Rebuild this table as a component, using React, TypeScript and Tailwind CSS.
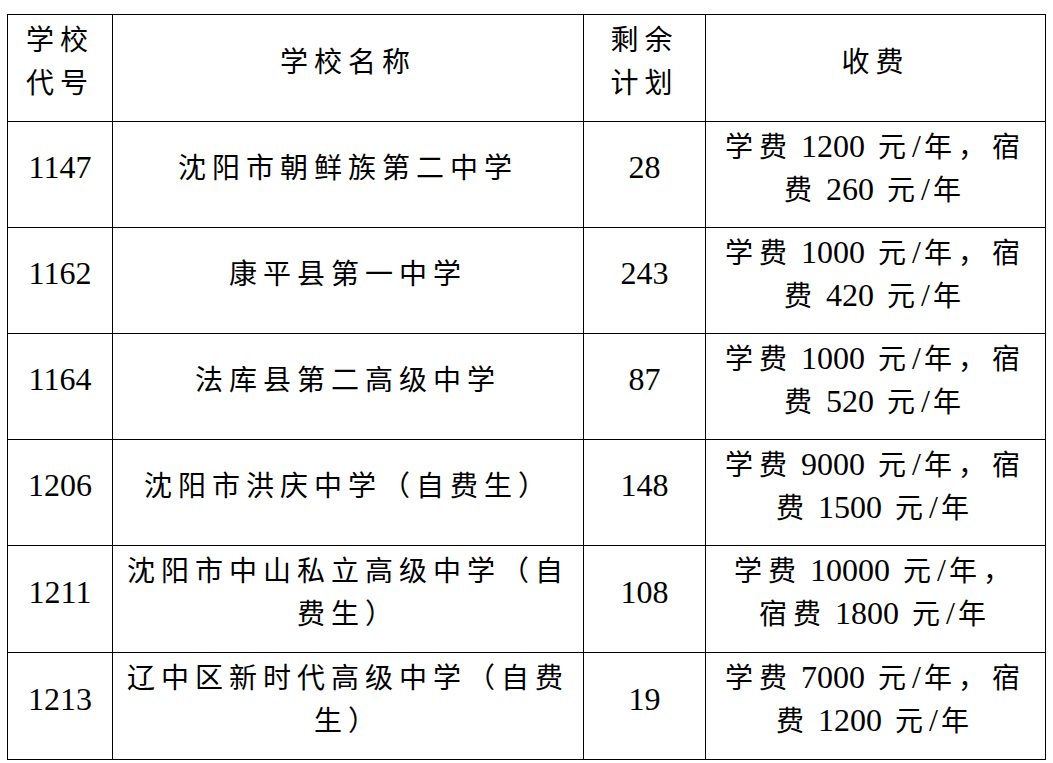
import React from "react"

interface Row {
    code: string
    name: string[]
    left: string
    fee: string[]
}

const rows: Row[] = [
    { code: "1147", name: ["沈阳市朝鲜族第二中学"], left: "28", fee: ["学费 1200 元/年，宿", "费 260 元/年"] },
    { code: "1162", name: ["康平县第一中学"], left: "243", fee: ["学费 1000 元/年，宿", "费 420 元/年"] },
    { code: "1164", name: ["法库县第二高级中学"], left: "87", fee: ["学费 1000 元/年，宿", "费 520 元/年"] },
    { code: "1206", name: ["沈阳市洪庆中学（自费生）"], left: "148", fee: ["学费 9000 元/年，宿", "费 1500 元/年"] },
    { code: "1211", name: ["沈阳市中山私立高级中学（自", "费生）"], left: "108", fee: ["学费 10000 元/年，", "宿费 1800 元/年"] },
    { code: "1213", name: ["辽中区新时代高级中学（自费", "生）"], left: "19", fee: ["学费 7000 元/年，宿", "费 1200 元/年"] },
]

const rowHeights = ["h-[107px]", "h-[106px]", "h-[106px]", "h-[106px]", "h-[106px]", "h-[107px]", "h-[107px]"]

// split a line into latin runs (serif, wider) and CJK runs (tracked out)
function Mixed({ text }: { text: string }) {
    const parts = text.split(/([\x00-\x7f]+)/).filter((p) => p.length > 0)
    return (
        <>
            {parts.map((p, i) => {
                if (p === "/") {
                    return <span key={i} className="text-[32px] leading-none pr-[3px]">/</span>
                }
                if (/^[\x00-\x7f]+$/.test(p)) {
                    return (
                        <span key={i} className={"text-[32px] leading-none tracking-normal whitespace-pre " + (p.endsWith(" ") ? "pr-[5px]" : "")}>
                            {p}
                        </span>
                    )
                }
                return <span key={i} className="text-[28px] leading-none tracking-[6px]">{p}</span>
            })}
        </>
    )
}

function Cell({ lines, last }: { lines: string[]; last?: boolean }) {
    return (
        <div className={"flex flex-col items-center justify-center pb-1 border-black border-l border-t " + (last ? "border-r" : "")}>
            {lines.map((l, i) => (
                <div key={i} className="leading-[43px] whitespace-nowrap">
                    <Mixed text={l} />
                </div>
            ))}
        </div>
    )
}

export default function App() {
    return (
        <div
            className="w-[1053px] h-[763px] bg-white text-black pl-[7px] pt-[14px]"
            style={{ fontFamily: '"Liberation Serif", "Noto Sans CJK SC", serif' }}
        >
            <div className="w-[1039px] border-b border-black">
                <div className={"grid grid-cols-[105px_471px_122px_341px] " + rowHeights[0]}>
                    <Cell lines={["学校", "代号"]} />
                    <Cell lines={["学校名称"]} />
                    <Cell lines={["剩余", "计划"]} />
                    <Cell lines={["收费"]} last />
                </div>
                {rows.map((r, i) => (
                    <div key={r.code} className={"grid grid-cols-[105px_471px_122px_341px] " + rowHeights[i + 1]}>
                        <Cell lines={[r.code]} />
                        <Cell lines={r.name} />
                        <Cell lines={[r.left]} />
                        <Cell lines={r.fee} last />
                    </div>
                ))}
            </div>
        </div>
    )
}
